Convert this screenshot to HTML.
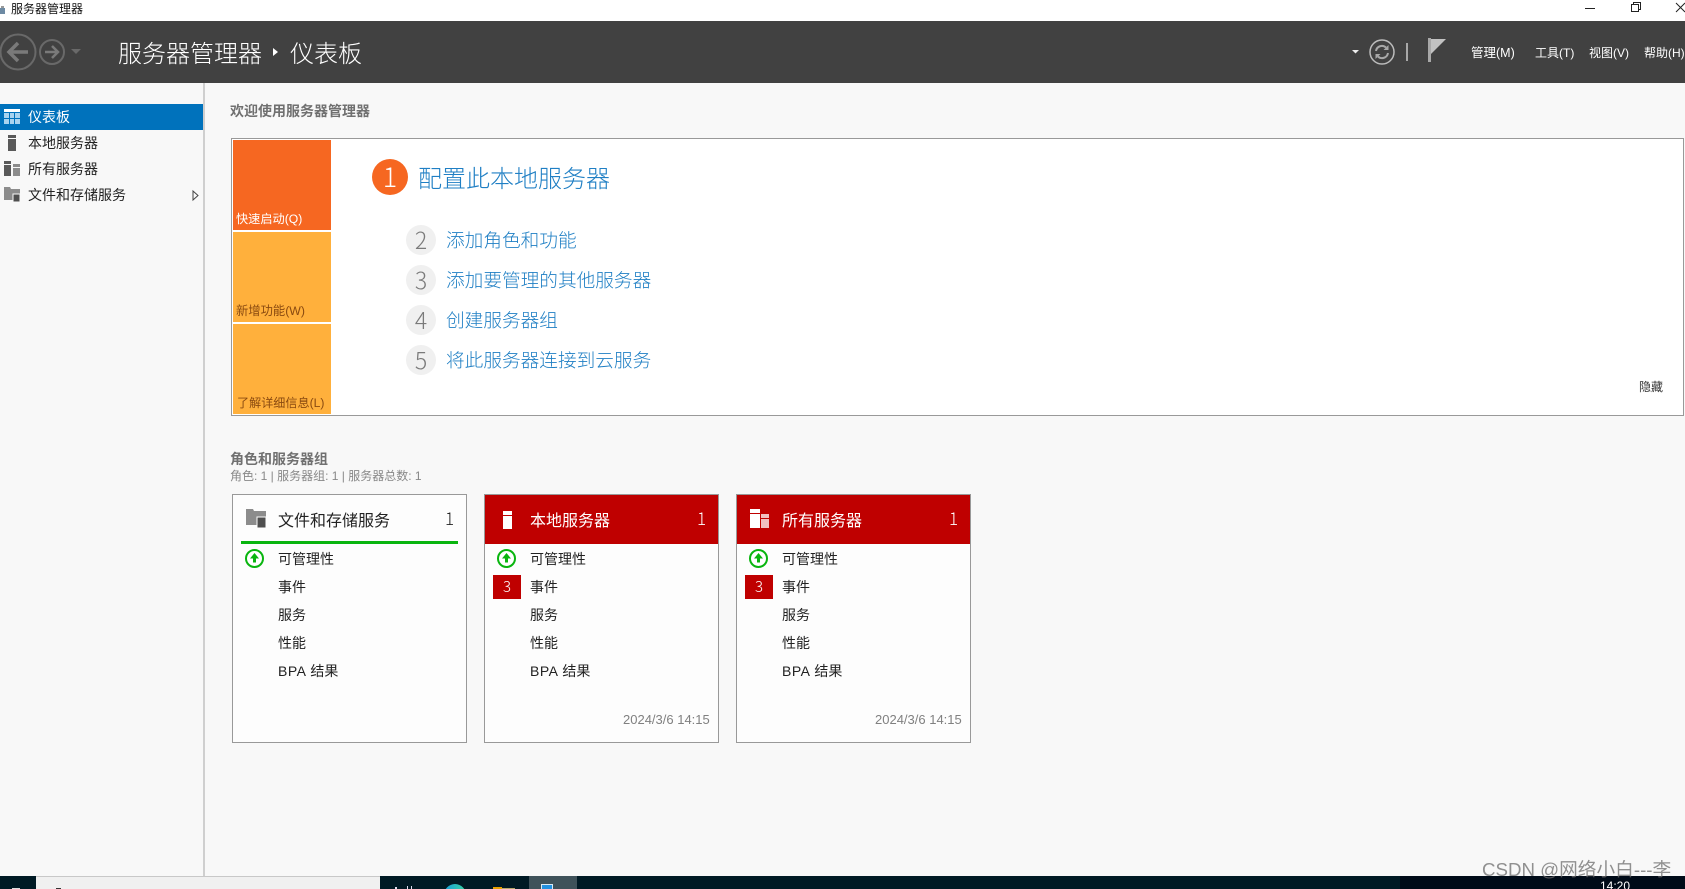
<!DOCTYPE html>
<html lang="zh-CN">
<head>
<meta charset="utf-8">
<title>服务器管理器</title>
<style>
html,body{margin:0;padding:0;width:1685px;height:889px;overflow:hidden;}
#p{position:absolute;left:0;top:0;width:1685px;height:889px;overflow:hidden;background:#f8f8f8;font-family:"Liberation Sans","Noto Sans CJK SC",sans-serif;color:#222;}
.a{position:absolute;}
.t{position:absolute;white-space:nowrap;line-height:20px;height:20px;}
svg{position:absolute;overflow:visible;}
.card{position:absolute;top:494px;width:233px;height:247px;border:1px solid #999;background:#fdfdfd;box-sizing:content-box;}
.lt{font-family:"Noto Sans CJK SC","Liberation Sans",sans-serif;font-weight:300;}
.num{position:absolute;border-radius:50%;background:#f0f0f0;color:#7a7a7a;width:30px;height:30px;left:406px;text-align:center;line-height:29px;font-size:23px;}
.lnk{color:#1f7fc4;font-size:18.67px;left:446px;line-height:24px;height:24px;font-weight:300;}
.b{letter-spacing:.5px;}
</style>
</head>
<body>
<div id="p">
<!-- title bar -->
<div class="a" style="left:0;top:0;width:1685px;height:21px;background:#fff;"></div>
<svg style="left:0;top:5px" width="6" height="9"><path d="M0 3h5v6H0z" fill="#6d8aa3"/><path d="M1 1h3v2H1z" fill="#999"/></svg>
<div class="t" style="left:11px;top:-1px;font-size:12px;color:#111;">服务器管理器</div>
<svg style="left:1585px;top:0" width="100" height="20">
<path d="M0 8.500h10" stroke="#222" stroke-width="1"/>
<path d="M46.500 4.500h7v7h-7zM48.500 4.500v-2h7v7h-2" fill="none" stroke="#222" stroke-width="1"/>
<path d="M91 3l9 9M100 3l-9 9" stroke="#222" stroke-width="1"/>
</svg>
<!-- dark header -->
<div class="a" style="left:0;top:21px;width:1685px;height:62px;background:#414141;"></div>
<svg style="left:0;top:21px" width="100" height="62">
<circle cx="18" cy="31" r="17.500" fill="none" stroke="#696969" stroke-width="2"/>
<path d="M28 31H10M18 22l-9 9 9 9" fill="none" stroke="#7a7a7a" stroke-width="3.500"/>
<circle cx="52" cy="31" r="12" fill="none" stroke="#696969" stroke-width="2"/>
<path d="M45 31h13M52 25l6 6-6 6" fill="none" stroke="#7a7a7a" stroke-width="2.500"/>
<path d="M71 28h10l-5 5z" fill="#696969"/>
</svg>
<div class="t lt" style="left:118px;top:35px;font-size:24px;color:#fff;line-height:34px;height:34px;">服务器管理器</div>
<svg style="left:272px;top:47px" width="8" height="10"><path d="M1 1l5 4-5 4z" fill="#fff"/></svg>
<div class="t lt" style="left:290px;top:35px;font-size:24px;color:#fff;line-height:34px;height:34px;">仪表板</div>
<svg style="left:1350px;top:35px" width="110" height="30">
<path d="M2 15h7l-3.500 3.500z" fill="#eee"/>
<circle cx="32" cy="17" r="12" fill="none" stroke="#bcbcbc" stroke-width="1.500"/>
<path d="M26 16a6 6 0 0 1 10-3.500M38 18a6 6 0 0 1-10 3.500" fill="none" stroke="#a8a8a8" stroke-width="2"/>
<path d="M38.500 10v5h-5zM25.500 24v-5h5z" fill="#a8a8a8"/>
<rect x="56" y="8" width="2" height="18" fill="#a8a8a8"/>
<rect x="78" y="3" width="3" height="24" fill="#a8a8a8"/>
<path d="M81 4h15l-15 15z" fill="#c2c2c2"/>
</svg>
<div class="t" style="left:1471px;top:43px;font-size:12.500px;color:#fff;">管理(M)</div>
<div class="t" style="left:1535px;top:43px;font-size:12px;color:#fff;">工具(T)</div>
<div class="t" style="left:1589px;top:43px;font-size:12px;color:#fff;">视图(V)</div>
<div class="t" style="left:1644px;top:43px;font-size:12px;color:#fff;">帮助(H)</div>
<!-- sidebar -->
<div class="a" style="left:203px;top:83px;width:2px;height:793px;background:#cfcfcf;"></div>
<div class="a" style="left:0;top:104px;width:203px;height:26px;background:#0072bc;"></div>
<svg style="left:4px;top:109px" width="17" height="17">
<rect x="0" y="0" width="16" height="3" fill="#fff"/>
<path d="M0 4h5v5H0zM6 4h4v5H6zM11 4h5v5h-5zM0 10h5v5H0zM6 10h4v5H6zM11 10h5v5h-5z" fill="#a9d3ef"/>
</svg>
<svg style="left:8px;top:135px" width="10" height="17"><rect x="0" y="0" width="8" height="3" fill="#595959"/><rect x="0" y="4" width="8" height="12" fill="#595959"/></svg>
<svg style="left:4px;top:161px" width="17" height="16"><rect x="0" y="0" width="7" height="3" fill="#595959"/><rect x="0" y="4" width="7" height="11" fill="#595959"/><rect x="9" y="3" width="7" height="3" fill="#8c8c8c"/><rect x="9" y="7" width="7" height="8" fill="#8c8c8c"/></svg>
<svg style="left:4px;top:187px" width="17" height="16"><path d="M0 0h6l1 2h9v11H0z" fill="#8c8c8c"/><rect x="9" y="7" width="7" height="8" fill="#4f4f4f" stroke="#f8f8f8"/></svg>
<div class="t" style="left:28px;top:107px;font-size:14px;color:#fff;">仪表板</div>
<div class="t" style="left:28px;top:133px;font-size:14px;color:#222;">本地服务器</div>
<div class="t" style="left:28px;top:159px;font-size:14px;color:#222;">所有服务器</div>
<div class="t" style="left:28px;top:185px;font-size:14px;color:#222;">文件和存储服务</div>
<svg style="left:192px;top:190px" width="8" height="11"><path d="M1 1l5 4.500-5 4.500z" fill="#f8f8f8" stroke="#444" stroke-width="1"/></svg>
<!-- welcome -->
<div class="t" style="left:230px;top:101px;font-size:14px;font-weight:700;color:#707070;">欢迎使用服务器管理器</div>
<div class="a" style="left:231px;top:138px;width:1453px;height:278px;box-sizing:border-box;border:1px solid #999;background:#fff;"></div>
<div class="a" style="left:233px;top:140px;width:98px;height:90px;background:#f66721;"></div>
<div class="a" style="left:233px;top:232px;width:98px;height:90px;background:#ffb03c;"></div>
<div class="a" style="left:233px;top:324px;width:98px;height:90px;background:#ffb03c;"></div>
<div class="t" style="left:236px;top:209px;font-size:12.200px;color:#fff;">快速启动(Q)</div>
<div class="t" style="left:236px;top:301px;font-size:12.300px;color:#8a4a10;">新增功能(W)</div>
<div class="t" style="left:237px;top:393px;font-size:12.100px;color:#8a4a10;">了解详细信息(L)</div>
<div class="a lt" style="left:372px;top:159px;width:36px;height:36px;border-radius:50%;background:#f66721;color:#fff;text-align:center;line-height:34px;font-size:27px;">1</div>
<div class="t lt" style="left:418px;top:160px;font-size:24px;color:#1f7fc4;line-height:34px;height:34px;">配置此本地服务器</div>
<div class="num lt" style="top:225px;">2</div><div class="t lnk lt" style="top:228px;">添加角色和功能</div>
<div class="num lt" style="top:265px;">3</div><div class="t lnk lt" style="top:268px;">添加要管理的其他服务器</div>
<div class="num lt" style="top:305px;">4</div><div class="t lnk lt" style="top:308px;">创建服务器组</div>
<div class="num lt" style="top:345px;">5</div><div class="t lnk lt" style="top:348px;">将此服务器连接到云服务</div>
<div class="t" style="left:1639px;top:377px;font-size:12px;color:#333;">隐藏</div>
<!-- section -->
<div class="t" style="left:230px;top:449px;font-size:14px;font-weight:700;color:#707070;">角色和服务器组</div>
<div class="t" style="left:230px;top:466px;font-size:12px;color:#888;">角色: 1 | 服务器组: 1 | 服务器总数: 1</div>
<!-- card 1 -->
<div class="card" style="left:232px;"></div>
<svg style="left:246px;top:509px" width="21" height="20"><path d="M0 0h7l1 2h12v14H0z" fill="#8c8c8c"/><rect x="11" y="8" width="9" height="11" fill="#4f4f4f" stroke="#fdfdfd"/></svg>
<div class="t lt" style="left:278px;top:507px;font-size:16px;color:#222;line-height:24px;height:24px;font-weight:400;">文件和存储服务</div>
<div class="t lt" style="left:445px;top:506px;font-size:17px;color:#222;line-height:24px;height:24px;">1</div>
<div class="a" style="left:241px;top:541px;width:217px;height:3px;background:#09b50f;"></div>
<!-- card 2 -->
<div class="card" style="left:484px;"></div>
<div class="a" style="left:485px;top:495px;width:233px;height:49px;background:#bf0000;"></div>
<svg style="left:503px;top:511px" width="10" height="18"><rect x="0" y="0" width="9" height="4" fill="#fff"/><rect x="0" y="5" width="9" height="13" fill="#fff"/></svg>
<div class="t lt" style="left:530px;top:507px;font-size:16px;color:#fff;line-height:24px;height:24px;font-weight:400;">本地服务器</div>
<div class="t lt" style="left:697px;top:506px;font-size:17px;color:#fff;line-height:24px;height:24px;">1</div>
<!-- card 3 -->
<div class="card" style="left:736px;"></div>
<div class="a" style="left:737px;top:495px;width:233px;height:49px;background:#bf0000;"></div>
<svg style="left:750px;top:509px" width="20" height="20"><rect x="0" y="0" width="10" height="4" fill="#fff"/><rect x="0" y="5" width="10" height="14" fill="#fff"/><rect x="11" y="5" width="8" height="4" fill="#f0c0c0"/><rect x="11" y="10" width="8" height="9" fill="#f0c0c0"/></svg>
<div class="t lt" style="left:782px;top:507px;font-size:16px;color:#fff;line-height:24px;height:24px;font-weight:400;">所有服务器</div>
<div class="t lt" style="left:949px;top:506px;font-size:17px;color:#fff;line-height:24px;height:24px;">1</div>
<!-- status icons -->
<svg style="left:245px;top:549px" width="20" height="20"><circle cx="9.500" cy="9.500" r="8.500" fill="#fff" stroke="#09b50f" stroke-width="2"/><path d="M9.500 4l4.500 5.500H11v4H8v-4H5z" fill="#09b50f"/></svg>
<svg style="left:497px;top:549px" width="20" height="20"><circle cx="9.500" cy="9.500" r="8.500" fill="#fff" stroke="#09b50f" stroke-width="2"/><path d="M9.500 4l4.500 5.500H11v4H8v-4H5z" fill="#09b50f"/></svg>
<svg style="left:749px;top:549px" width="20" height="20"><circle cx="9.500" cy="9.500" r="8.500" fill="#fff" stroke="#09b50f" stroke-width="2"/><path d="M9.500 4l4.500 5.500H11v4H8v-4H5z" fill="#09b50f"/></svg>
<div class="a lt" style="left:493px;top:575px;width:28px;height:24px;background:#bf0000;color:#fff;text-align:center;line-height:23px;font-size:15px;">3</div>
<div class="a lt" style="left:745px;top:575px;width:28px;height:24px;background:#bf0000;color:#fff;text-align:center;line-height:23px;font-size:15px;">3</div>
<!-- rows -->
<div class="t" style="left:278px;top:549px;font-size:14px;">可管理性</div>
<div class="t" style="left:278px;top:577px;font-size:14px;">事件</div>
<div class="t" style="left:278px;top:605px;font-size:14px;">服务</div>
<div class="t" style="left:278px;top:633px;font-size:14px;">性能</div>
<div class="t" style="left:278px;top:661px;font-size:14px;"><span class="b">BPA</span> 结果</div>
<div class="t" style="left:530px;top:549px;font-size:14px;">可管理性</div>
<div class="t" style="left:530px;top:577px;font-size:14px;">事件</div>
<div class="t" style="left:530px;top:605px;font-size:14px;">服务</div>
<div class="t" style="left:530px;top:633px;font-size:14px;">性能</div>
<div class="t" style="left:530px;top:661px;font-size:14px;"><span class="b">BPA</span> 结果</div>
<div class="t" style="left:782px;top:549px;font-size:14px;">可管理性</div>
<div class="t" style="left:782px;top:577px;font-size:14px;">事件</div>
<div class="t" style="left:782px;top:605px;font-size:14px;">服务</div>
<div class="t" style="left:782px;top:633px;font-size:14px;">性能</div>
<div class="t" style="left:782px;top:661px;font-size:14px;"><span class="b">BPA</span> 结果</div>
<div class="t" style="left:623px;top:710px;font-size:13px;color:#808080;">2024/3/6 14:15</div>
<div class="t" style="left:875px;top:710px;font-size:13px;color:#808080;">2024/3/6 14:15</div>
<!-- taskbar -->
<div class="a" style="left:0;top:876px;width:1685px;height:13px;background:#001a24;"></div>
<div class="a" style="left:1400px;top:876px;width:285px;height:13px;background:#000b18;"></div>
<div class="a" style="left:36px;top:876px;width:344px;height:13px;background:#f0f0f0;border-top:1px solid #c8c8c8;box-sizing:border-box;"></div>
<div class="a" style="left:12px;top:888px;width:8px;height:1px;background:#ddd;"></div>
<div class="a" style="left:56px;top:888px;width:5px;height:1px;background:#333;"></div>
<div class="a" style="left:529px;top:876px;width:48px;height:13px;background:#3f525a;"></div>
<div class="a" style="left:541px;top:884px;width:12px;height:5px;background:#2391e0;border:1px solid #d8eaf5;border-bottom:0;box-sizing:border-box;"></div>
<div class="a" style="left:395px;top:887px;width:2px;height:2px;background:#dde;"></div>
<div class="a" style="left:407px;top:886px;width:5px;height:3px;border-left:1px solid #dde;border-right:1px solid #dde;box-sizing:border-box;"></div>
<div class="a" style="left:444px;top:884px;width:22px;height:5px;overflow:hidden;"><div style="width:22px;height:22px;border-radius:50%;background:linear-gradient(90deg,#1b9fdc,#36d3a0);"></div></div>
<div class="a" style="left:493px;top:887px;width:9px;height:2px;background:#e8a000;"></div>
<div class="a" style="left:502px;top:888px;width:13px;height:1px;background:#b5a66a;"></div>
<div class="a" style="left:1600px;top:879px;height:10px;width:36px;overflow:hidden;font-size:12px;line-height:14px;color:#fff;white-space:nowrap;">14:20</div>
<div class="t" style="left:1482px;top:857px;font-size:18.700px;color:rgba(110,110,110,.75);line-height:26px;height:26px;">CSDN @网络小白---李</div>
</div>
</body>
</html>
